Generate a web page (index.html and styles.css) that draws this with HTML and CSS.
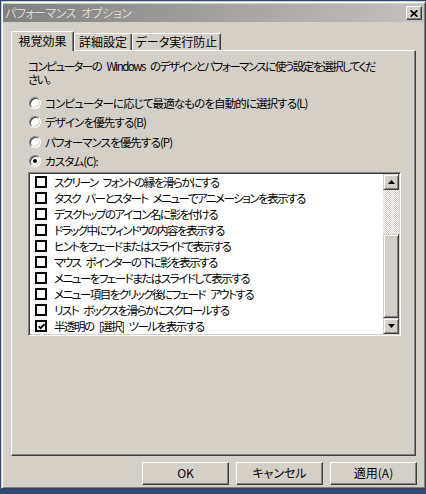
FILE: index.html
```html
<!DOCTYPE html>
<html lang="ja">
<head>
<meta charset="utf-8">
<title>パフォーマンス オプション</title>
<link rel="stylesheet" href="styles.css">
</head>
<body>
<div class="window">
  <div class="titlebar">
    <span class="title">パフォーマンス オプション</span>
    <span class="close"><svg width="8" height="7" viewBox="0 0 8 7"><path d="M0.6 0.4 L7.4 6.6 M7.4 0.4 L0.6 6.6" stroke="#000" stroke-width="1.7"/></svg></span>
  </div>
  <div class="content">
    <div class="tabs">
      <div class="tab tab-1 selected">視覚効果</div>
      <div class="tab tab-2">詳細設定</div>
      <div class="tab tab-3">データ実行防止</div>
    </div>
    <div class="panel">
      <p class="desc"><span class="line">コンピューターの Windows のデザインとパフォーマンスに使う設定を選択してくだ</span><span class="line">さい。</span></p>
      <div class="radios">
        <div class="radio"><span class="rb"></span>コンピューターに応じて最適なものを自動的に選択する(L)</div>
        <div class="radio"><span class="rb"></span>デザインを優先する(B)</div>
        <div class="radio"><span class="rb"></span>パフォーマンスを優先する(P)</div>
        <div class="radio"><span class="rb on"></span>カスタム(C):</div>
      </div>
      <div class="listbox">
        <ul class="items">
          <li class="item"><span class="cb"></span>スクリーン フォントの縁を滑らかにする</li>
          <li class="item"><span class="cb"></span>タスク バーとスタート メニューでアニメーションを表示する</li>
          <li class="item"><span class="cb"></span>デスクトップのアイコン名に影を付ける</li>
          <li class="item"><span class="cb"></span>ドラッグ中にウィンドウの内容を表示する</li>
          <li class="item"><span class="cb"></span>ヒントをフェードまたはスライドで表示する</li>
          <li class="item"><span class="cb"></span>マウス ポインターの下に影を表示する</li>
          <li class="item"><span class="cb"></span>メニューをフェードまたはスライドして表示する</li>
          <li class="item"><span class="cb"></span>メニュー項目をクリック後にフェード アウトする</li>
          <li class="item"><span class="cb"></span>リスト ボックスを滑らかにスクロールする</li>
          <li class="item"><span class="cb"><svg width="7" height="7" viewBox="0 0 7 7"><path d="M0.5 3 L2.6 5.2 L6.6 1" fill="none" stroke="#000" stroke-width="1.8"/></svg></span>半透明の [選択] ツールを表示する</li>
        </ul>
        <div class="scrollbar">
          <div class="sb-btn"><svg width="7" height="4" viewBox="0 0 7 4"><path d="M3.5 0 L7 4 L0 4 Z" fill="#000"/></svg></div>
          <div class="sb-track"></div>
          <div class="sb-thumb"></div>
          <div class="sb-btn"><svg width="7" height="4" viewBox="0 0 7 4"><path d="M0 0 L7 0 L3.5 4 Z" fill="#000"/></svg></div>
        </div>
      </div>
    </div>
    <div class="buttons">
      <div class="btn">OK</div>
      <div class="btn">キャンセル</div>
      <div class="btn">適用(A)</div>
    </div>
  </div>
</div>
</body>
</html>
```
FILE: styles.css
```css
* { box-sizing: border-box; }
html, body { margin: 0; padding: 0; }
body {
  width: 426px;
  height: 494px;
  overflow: hidden;
  background: #2b4a78;
  font-family: "Noto Sans CJK JP", "Noto Sans", sans-serif;
  font-size: 12px;
  color: #000;
  font-feature-settings: "palt" 1;
}
.window {
  margin: 1px 0 0 1px;
  width: 425px;
  height: 488px;
  background: #d4d0c8;
  border: 1px solid;
  border-color: #d4d0c8 #404040 #404040 #d4d0c8;
  box-shadow: inset 1px 1px #fff, inset -1px -1px #808080;
  padding: 1px;
  display: flex;
  flex-direction: column;
}
.titlebar {
  height: 18px;
  margin-top: 1px;
  background: linear-gradient(to right, #808080, #c4c2bf);
  display: flex;
  align-items: center;
  justify-content: space-between;
  padding: 0 2px;
  color: #dcd9d3;
  line-height: 16px;
}
.title { letter-spacing: -0.5px; word-spacing: 3px; }
.close {
  width: 16px;
  height: 14px;
  background: #d4d0c8;
  border: 1px solid;
  border-color: #fff #404040 #404040 #fff;
  box-shadow: inset -1px -1px #808080;
  display: flex;
  align-items: center;
  justify-content: center;
}
.close svg { display: block; }
.content {
  flex: 1;
  padding: 9px 7px 0 8px;
  display: flex;
  flex-direction: column;
}
.tabs {
  display: flex;
  align-items: flex-end;
  height: 20px;
  margin-bottom: -1px;
  position: relative;
  z-index: 1;
}
.tab {
  height: 17px;
  margin-bottom: 1px;
  border: 1px solid;
  border-bottom: none;
  border-color: #fff #404040 #404040 #fff;
  box-shadow: inset -1px 0 #808080;
  border-radius: 2px 2px 0 0;
  text-align: center;
  line-height: 14px;
  padding-top: 1px;
  background: #d4d0c8;
  white-space: nowrap;
}
.tab.selected {
  height: 20px;
  margin-bottom: 0;
  padding-top: 2px;
}
.tab-1 { width: 63px; }
.tab-2 { width: 58px; }
.tab-3 { width: 89px; }
.panel {
  width: 405px;
  height: 406px;
  border: 1px solid;
  border-color: #fff #404040 #404040 #fff;
  box-shadow: inset -1px -1px #808080;
  padding: 9px 0 0 16px;
}
.desc {
  margin: 0;
  font-size: 11.5px;
  letter-spacing: -1.5px;
  word-spacing: 4px;
  white-space: nowrap;
}
.desc .line {
  display: block;
  height: 13px;
  line-height: 13px;
}
.radios { margin-top: 7px; }
.radio {
  display: flex;
  align-items: center;
  height: 19.5px;
  white-space: nowrap;
  font-size: 11.5px;
  letter-spacing: -0.9px;
}
.rb {
  width: 12px;
  height: 12px;
  flex: none;
  border-radius: 50%;
  margin: 0 4px 0 1px;
  background: #fff;
  border: 1px solid;
  border-color: #808080 #fff #fff #808080;
  box-shadow: inset 1px 1px #404040, inset -1px -1px #d4d0c8;
  display: flex;
  align-items: center;
  justify-content: center;
}
.rb.on::after {
  content: "";
  width: 4px;
  height: 4px;
  background: #000;
  border-radius: 50%;
}
.listbox {
  margin-top: 1px;
  width: 373px;
  height: 164px;
  display: flex;
  background: #fff;
  border: 1px solid;
  border-color: #808080 #fff #fff #808080;
  box-shadow: inset 1px 1px #404040, inset -1px -1px #d4d0c8;
  padding: 1px;
}
.items {
  flex: 1;
  list-style: none;
  margin: 0;
  padding: 0;
  overflow: hidden;
}
.item {
  height: 16px;
  display: flex;
  align-items: center;
  padding-left: 5px;
  white-space: nowrap;
  line-height: 16px;
  font-size: 11.5px;
  letter-spacing: -1.5px;
  word-spacing: 4px;
}
.cb {
  width: 12px;
  height: 12px;
  flex: none;
  border: 2px solid #000;
  background: #fff;
  margin-right: 7px;
  display: flex;
  align-items: center;
  justify-content: center;
}
.cb svg { display: block; }
.scrollbar {
  width: 16px;
  flex: none;
  display: flex;
  flex-direction: column;
}
.sb-btn, .sb-thumb {
  background: #d4d0c8;
  border: 1px solid;
  border-color: #d4d0c8 #404040 #404040 #d4d0c8;
  box-shadow: inset 1px 1px #fff, inset -1px -1px #808080;
}
.sb-btn {
  height: 16px;
  display: flex;
  align-items: center;
  justify-content: center;
}
.sb-btn svg { display: block; }
.sb-track {
  height: 44px;
  background: repeating-conic-gradient(#fff 0 25%, #d4d0c8 0 50%) 0 0 / 2px 2px;
}
.sb-thumb { height: 84px; }
.buttons {
  display: flex;
  justify-content: flex-end;
  gap: 7px;
  margin-top: 6px;
}
.btn {
  width: 87px;
  height: 23px;
  background: #d4d0c8;
  border: 1px solid;
  border-color: #fff #404040 #404040 #fff;
  box-shadow: inset -1px -1px #808080;
  text-align: center;
  line-height: 20px;
  white-space: nowrap;
}
```
